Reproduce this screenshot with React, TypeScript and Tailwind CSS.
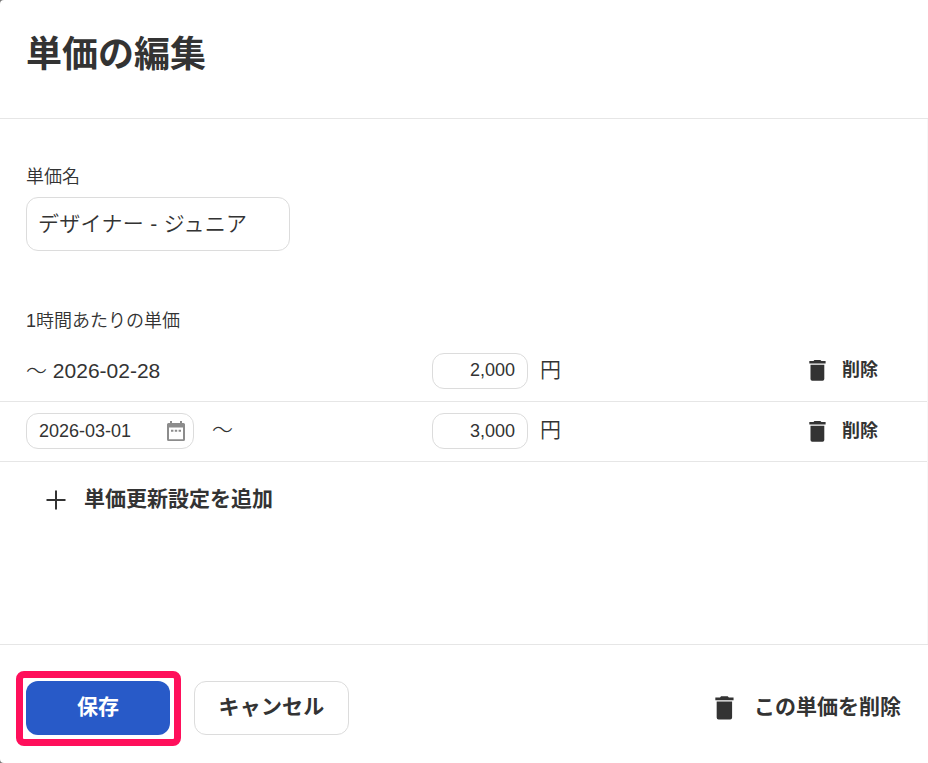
import { clsx } from "clsx";

const TrashIcon = ({ className }: { className?: string }) => (
  <svg viewBox="0 0 17 21" fill="currentColor" className={className} aria-hidden="true">
    <path d="M5.400 0h6l1 1.100h4.200v2.400H.300V1.100h4.200z" />
    <path d="M1.500 4.700h13.800v14.400a1.700 1.700 0 0 1-1.700 1.700H3.200a1.700 1.700 0 0 1-1.700-1.700z" />
  </svg>
);

const CalendarIcon = () => (
  <svg viewBox="0 0 18 20" className="h-5 w-[18px] text-[#8c8c8c]" aria-hidden="true">
    <path
      fill="currentColor"
      fillRule="evenodd"
      d="M3 0h2v2h8V0h2v2h1.500A1.500 1.500 0 0 1 18 3.500v15a1.500 1.500 0 0 1-1.500 1.500h-15A1.500 1.500 0 0 1 0 18.500v-15A1.500 1.500 0 0 1 1.500 2H3zM2 6.500v11.700h14V6.500z"
    />
    <path fill="currentColor" d="M4 8.700h2.400v2.100H4zM7.800 8.700h2.400v2.100H7.800zM11.600 8.700H14v2.100h-2.400z" />
  </svg>
);

type Rate = {
  id: number;
  date: string;
  price: string;
  editable: boolean;
};

const rates: Rate[] = [
  { id: 1, date: "2026-02-28", price: "2,000", editable: false },
  { id: 2, date: "2026-03-01", price: "3,000", editable: true },
];

const RateRow = ({ rate }: { rate: Rate }) => (
  <div
    className={clsx(
      "flex items-center border-b border-[#e6e6e6] pl-[26px] pr-[49px]",
      rate.editable ? "h-[60px] pb-px" : "h-[61px]"
    )}
  >
    <div className="flex w-[406px] items-center">
      {rate.editable ? (
        <>
          <div className="flex h-9 w-[168px] items-center justify-between rounded-xl border border-[#dcdcdc] pl-3 pr-2 text-lg">
            <span>{rate.date}</span>
            <CalendarIcon />
          </div>
          <span className="-mt-0.5 ml-[18px] text-[21px] font-light">～</span>
        </>
      ) : (
        <span className="text-[21px]">
          <span className="font-light">～</span> {rate.date}
        </span>
      )}
    </div>
    <div
      className={clsx(
        "flex h-9 w-24 items-center justify-end rounded-xl border border-[#dcdcdc] pr-3 text-lg",
        !rate.editable && "pb-0.5"
      )}
    >
      {rate.price}
    </div>
    <span className="-mt-[3px] ml-3 text-[21px]">円</span>
    <button className="ml-auto flex items-center text-lg font-bold">
      <TrashIcon className={clsx("mr-4 h-[21px] w-[17px]", !rate.editable && "-mt-px")} />
      <span className={clsx(!rate.editable && "-mt-0.5")}>削除</span>
    </button>
  </div>
);

export default function App() {
  return (
    <div className="bg-[#777]">
      <div className="flex h-[763px] w-[928px] flex-col rounded-l-[4px] bg-white font-['Liberation_Sans','Noto_Sans_CJK_JP',sans-serif] font-[350] text-[#333]">
        <header className="h-[119px] shrink-0 border-b border-[#e6e6e6] pl-[26px] pt-[29px]">
          <h1 className="text-4xl leading-[52px] font-bold">単価の編集</h1>
        </header>

        <main className="flex-1 border-r border-[#f7f7f7]">
          <div className="pl-[26px] pt-[45px]">
            <div className="text-lg leading-[27px]">単価名</div>
            <div className="mt-[6px] flex h-[54px] w-[264px] items-center rounded-xl border border-[#dcdcdc] pl-[11px] text-[21px] tracking-[0.3px]">
              デザイナー - ジュニア
            </div>
            <div className="mt-[57px] text-lg leading-[27px]">1時間あたりの単価</div>
          </div>
          <div className="mt-[6px]">
            {rates.map((rate) => (
              <RateRow key={rate.id} rate={rate} />
            ))}
          </div>
          <button className="ml-[46px] mt-[22px] flex items-center text-[21px] font-bold">
            <svg viewBox="0 0 20 20" className="mr-[19px] mt-0.5 size-5" aria-hidden="true">
              <path d="M10 .500v19M.500 10h19" stroke="currentColor" strokeWidth="2" />
            </svg>
            <span className="-ml-px -mt-px">単価更新設定を追加</span>
          </button>
        </main>

        <footer className="flex h-[119px] shrink-0 items-start border-t border-[#e6e6e6] pl-4 pr-[27px] pt-[26px] text-[21px] font-bold">
          <div className="rounded-lg border-[7px] border-[#ff0f5b] pt-[3px] pr-1 pb-1 pl-[3px]">
            <button className="block h-[54px] w-[144px] rounded-xl bg-[#285ac8] pb-0.5 text-white">保存</button>
          </div>
          <button className="ml-[13px] mt-[10px] h-[54px] w-[155px] rounded-xl border border-[#dcdcdc] pb-0.5 tracking-[0.2px]">
            キャンセル
          </button>
          <button className="ml-auto mt-[10px] flex h-[54px] items-center">
            <TrashIcon className="mr-[20px] h-6 w-[19px]" />
            <span className="-mt-0.5">この単価を削除</span>
          </button>
        </footer>
      </div>
    </div>
  );
}
